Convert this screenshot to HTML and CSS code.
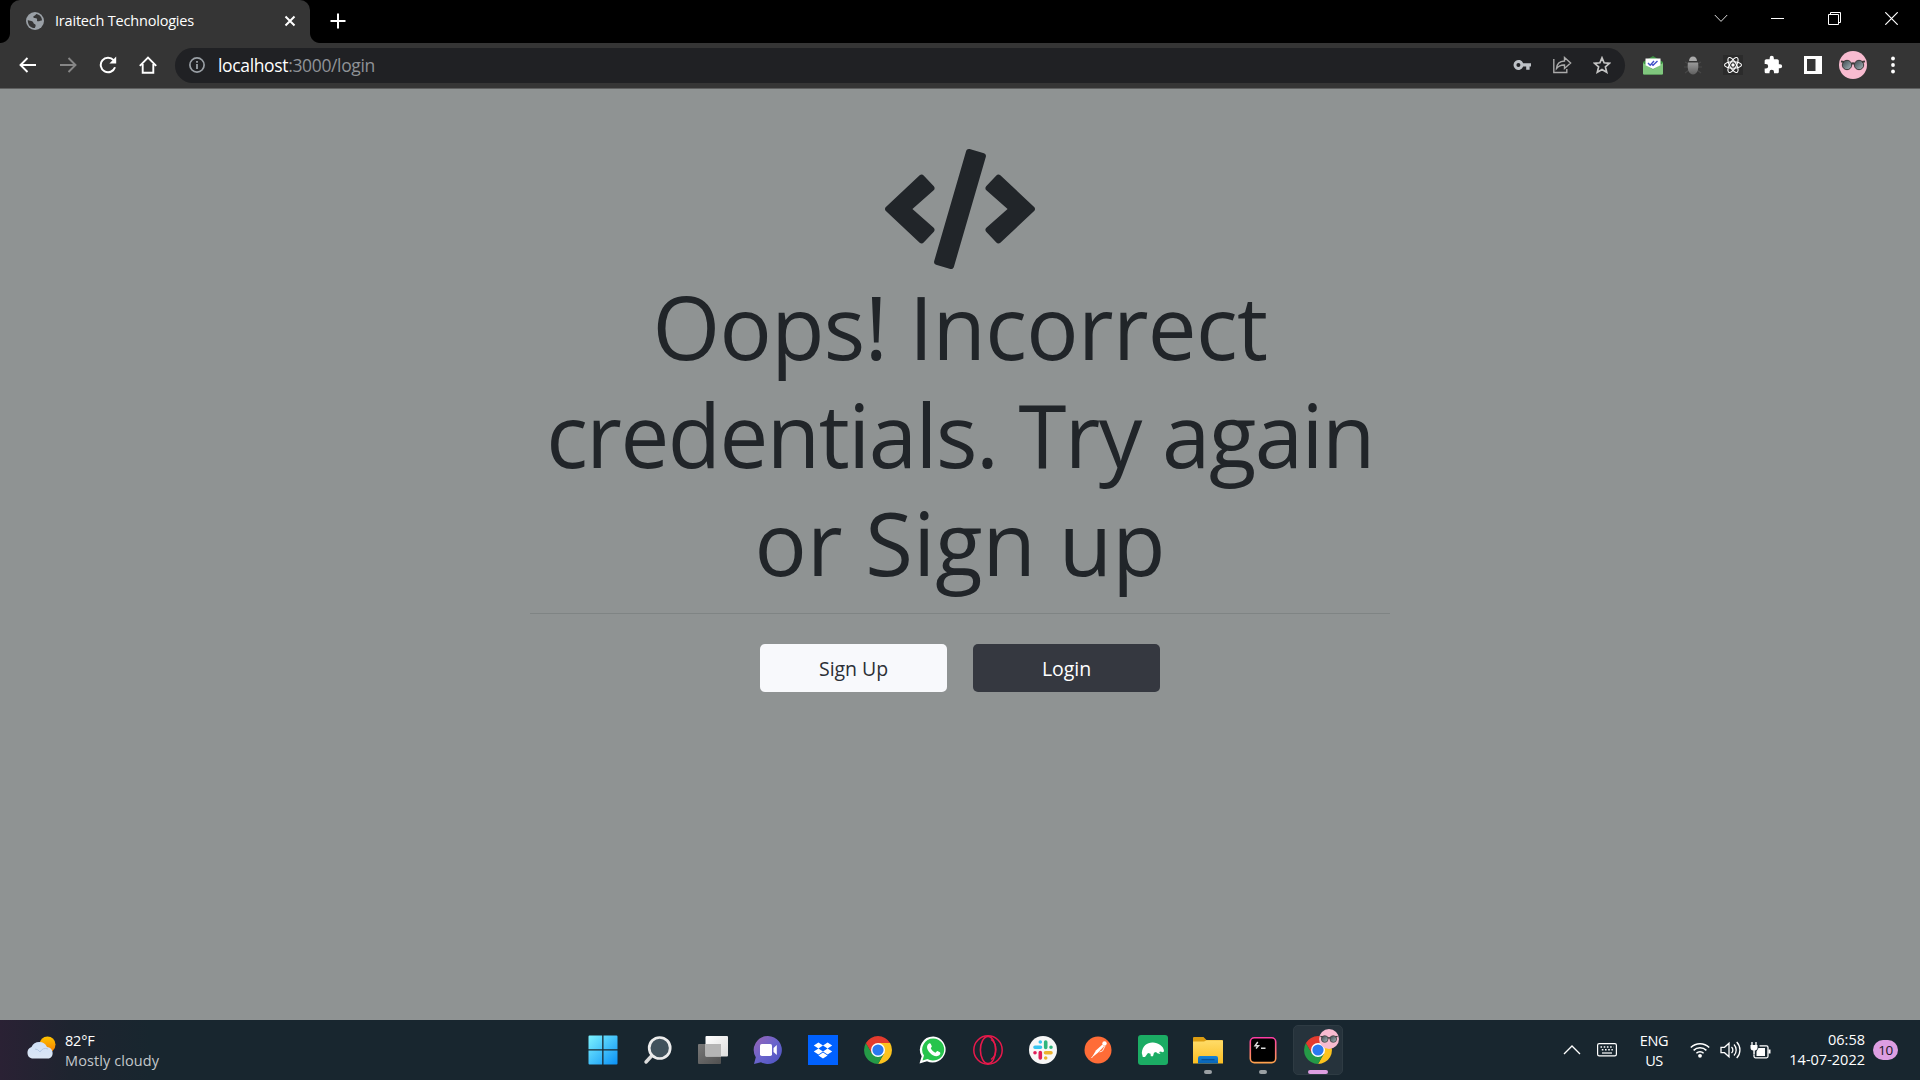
FILE: index.html
```html
<!DOCTYPE html>
<html lang="en">
<head>
<meta charset="utf-8">
<title>Iraitech Technologies</title>
<link rel="stylesheet" href="styles.css">
</head>
<body>
<svg class="defs" width="0" height="0" aria-hidden="true">
  <defs>
    <linearGradient id="win" x1="0" y1="0" x2="1" y2="1"><stop offset="0" stop-color="#7df3ff"/><stop offset="1" stop-color="#0a90f5"/></linearGradient>
    <linearGradient id="chat" x1="0" y1="0" x2="1" y2="1"><stop offset="0" stop-color="#9a64b4"/><stop offset=".5" stop-color="#6a64cc"/><stop offset="1" stop-color="#4a52c0"/></linearGradient>
    <linearGradient id="sun" x1="0" y1="0" x2="0" y2="1"><stop offset="0" stop-color="#ffc400"/><stop offset="1" stop-color="#f57c00"/></linearGradient>
    <linearGradient id="cloud" x1="0" y1="0" x2="0" y2="1"><stop offset="0" stop-color="#cfe0f7"/><stop offset="1" stop-color="#dbe6f4"/></linearGradient>
    <linearGradient id="folder" x1="0" y1="0" x2="0" y2="1"><stop offset="0" stop-color="#ffdc69"/><stop offset="1" stop-color="#fbbe22"/></linearGradient>
    <linearGradient id="blue" x1="0" y1="0" x2="0" y2="1"><stop offset="0" stop-color="#1483d8"/><stop offset="1" stop-color="#0862b4"/></linearGradient>
    <linearGradient id="term" x1="0" y1="0" x2="0" y2="1"><stop offset="0" stop-color="#ff3da5"/><stop offset="1" stop-color="#ffa24d"/></linearGradient>
    <linearGradient id="bug" x1="0" y1="0" x2="0" y2="1"><stop offset="0" stop-color="#9a9a9a"/><stop offset="1" stop-color="#606060"/></linearGradient>
    <linearGradient id="lens" x1="0" y1="0" x2="1" y2="1"><stop offset="0" stop-color="#3a464c"/><stop offset="1" stop-color="#a9b8bd"/></linearGradient>
    <linearGradient id="pane" x1="0" y1="0" x2="1" y2="1"><stop offset="0" stop-color="#fff"/><stop offset="1" stop-color="#ddd"/></linearGradient>
    <linearGradient id="shade" x1="0" y1="0" x2="1" y2="1"><stop offset="0" stop-color="#787878"/><stop offset="1" stop-color="#505050"/></linearGradient>
    <symbol id="chrome" viewBox="0 0 28 28">
      <path d="M14 7h12.100a14 14 0 0 1-12.100 21l6-10.500z" fill="#fcc31e"/>
      <path d="M1.900 7A14 14 0 0 0 14 28l6-10.500-12 0z" fill="#259a47"/>
      <path d="M1.900 7A14 14 0 0 1 26.100 7H14L8 17.500z" fill="#e33b2e"/>
      <circle cx="14" cy="14" r="7" fill="#fff"/><circle cx="14" cy="14" r="5.600" fill="#2a79f0"/>
    </symbol>
    <symbol id="avatar" viewBox="0 0 28 28">
      <circle cx="14" cy="14" r="14" fill="#f8bbd0"/>
      <g fill="url(#lens)" stroke="#3e3a3a" stroke-width="1"><circle cx="8" cy="14" r="4.700"/><circle cx="20" cy="14" r="4.700"/></g>
      <path d="M2 10.400l3 .6M26 10.400l-3 .6M12.500 13q1.500-1.500 3 0" fill="none" stroke="#3e3a3a" stroke-width="1.800"/>
    </symbol>
  </defs>
</svg>

<header class="browser">
  <div class="tabstrip">
    <div class="tab">
      <svg class="favicon" width="18" height="18" viewBox="0 0 18 18"><circle cx="9" cy="9" r="9" fill="#9aa0a6"/><path d="M1.800 8c1.500 1.200 3.500.6 4.700 1.500 1.300 1 .6 2 2 2.400 1.700.5 1.300 2 .3 4.200C4.800 16.200 1.500 13 1.800 8zM10 1.900c-.3 2-3 1.500-2.600 3.300.3 1.500 2.300.5 3.300 1.300 1.100.8-.6 2.600 1.300 2.800 1.600.2 2-1.200 4-.7C16.100 5 13.600 2.300 10 1.900z" fill="#353535"/></svg>
      <span class="tab-title">Iraitech Technologies</span>
      <svg class="tab-close" width="12" height="12" viewBox="0 0 12 12"><path d="M1.500 1.500l9 9M10.500 1.500l-9 9" stroke="#fff" stroke-width="2"/></svg>
    </div>
    <svg class="newtab" width="16" height="16" viewBox="0 0 16 16"><path d="M8 .5v15M.5 8h15" stroke="#fff" stroke-width="2"/></svg>
    <div class="winctl">
      <span><svg width="14" height="9" viewBox="0 0 14 9"><path d="M.8 1l6.200 6.400L13.200 1" fill="none" stroke="#ddd"/></svg></span>
      <span><svg width="13" height="3" viewBox="0 0 13 3"><path d="M0 1.500h13" stroke="#fff"/></svg></span>
      <span><svg width="13" height="13" viewBox="0 0 13 13"><path d="M.5 2.500h10v10H.5zM2.500 2.500v-2h10v10h-2" fill="none" stroke="#fff"/></svg></span>
      <span><svg width="13" height="13" viewBox="0 0 13 13"><path d="M.3.3l12.400 12.400M12.700.3L.3 12.700" stroke="#fff" stroke-width="1.200"/></svg></span>
    </div>
  </div>
  <div class="toolbar">
    <div class="nav">
      <span><svg width="18" height="16" viewBox="0 0 18 16"><path d="M17 8H2M8.500 1L1.500 8l7 7" fill="none" stroke="#fff" stroke-width="1.900"/></svg></span>
      <span><svg width="18" height="16" viewBox="0 0 18 16"><path d="M1 8h15M9.500 1l7 7-7 7" fill="none" stroke="#868686" stroke-width="1.900"/></svg></span>
      <span><svg width="18" height="18" viewBox="0 0 18 18"><path d="M16 11.200A7.300 7.300 0 1 1 14.600 4.200" fill="none" stroke="#fff" stroke-width="2"/><path d="M17.200.6v6.800h-6.800z" fill="#fff"/></svg></span>
      <span><svg width="18" height="18" viewBox="0 0 18 18"><path d="M.8 9.800L9 1.600l8.200 8.200M3.700 8v8.800h10.600V8" fill="none" stroke="#fff" stroke-width="1.900"/></svg></span>
    </div>
    <div class="omnibox">
      <svg class="info" width="16" height="16" viewBox="0 0 16 16"><circle cx="8" cy="8" r="7.100" fill="none" stroke="#9aa0a6" stroke-width="1.700"/><path d="M8 7v5M8 4v1.800" stroke="#9aa0a6" stroke-width="1.800"/></svg>
      <span class="host">localhost</span><span class="path">:3000/login</span>
      <div class="omni-actions">
        <span><svg width="18" height="12" viewBox="0 0 18 12"><path fill="#bdc1c6" fill-rule="evenodd" d="M10.200 4.200A5 5 0 1 0 10.200 7.600h3V10.800h3.400V7.600H18V4.200zM5.400 3.900a2 2 0 1 1 0 4 2 2 0 0 1 0-4z"/></svg></span>
        <span><svg width="20" height="18" viewBox="0 0 20 18"><path d="M1.800 3v13.500h13V13M4.500 12.500c.3-4.300 3-7.300 8-7.500V1.500L18.600 7l-6.100 5.500V9C9 8.800 6.500 10 4.500 12.500z" fill="none" stroke="#aaa" stroke-width="1.400"/></svg></span>
        <span><svg width="18" height="18" viewBox="0 0 18 18"><path d="M9 1.800l2.100 5 5.400.5-4.100 3.600 1.300 5.300L9 13.400l-4.700 2.800 1.300-5.300-4.100-3.600 5.400-.5z" fill="none" stroke="#c4c4c4" stroke-width="1.700"/></svg></span>
      </div>
    </div>
    <div class="exts">
      <span><svg width="22" height="20" viewBox="0 0 22 20"><path d="M1 7L11 1l10 6v11.500a1 1 0 0 1-1 1H2a1 1 0 0 1-1-1z" fill="#3d9343"/><path d="M1 8l10 6.500L21 8v10.500a1 1 0 0 1-1 1H2a1 1 0 0 1-1-1z" fill="#80c77e"/><path d="M3.500 3.500h15v6.700L11 14 3.500 10.200z" fill="#fff"/><path d="M6 8l2.200 2.300L12 6M10 9.500l1 .8L15.500 6" fill="none" stroke="#4150c8" stroke-width="1.400"/></svg></span>
      <span><svg width="18" height="19" viewBox="0 0 18 19"><path d="M1 6l4 2M17 6l-4 2M0 11h5M18 11h-5M1 17l4-3M17 17l-4-3" stroke="#484848" stroke-width="1.200"/><path d="M5 5a4 4.500 0 0 1 8 0z" fill="#aaa"/><path d="M4 6.500h10c1.200 7-1 12-5 12s-6.200-5-5-12z" fill="url(#bug)"/></svg></span>
      <span><svg width="20" height="20" viewBox="0 0 20 20"><rect width="20" height="20" fill="#2b2b2b"/><g fill="none" stroke="#fff" stroke-width="1.100"><ellipse cx="10" cy="10" rx="8.500" ry="3.300"/><ellipse cx="10" cy="10" rx="8.500" ry="3.300" transform="rotate(60 10 10)"/><ellipse cx="10" cy="10" rx="8.500" ry="3.300" transform="rotate(120 10 10)"/></g><circle cx="10" cy="10" r="1.700" fill="#fff"/></svg></span>
      <span><svg width="20" height="20" viewBox="0 0 24 24"><path d="M20.500 11H19V7c0-1.100-.9-2-2-2h-4V3.500a2.500 2.500 0 0 0-5 0V5H4c-1.100 0-2 .9-2 2v3.800h1.500a2.700 2.700 0 0 1 0 5.400H2V20c0 1.100.9 2 2 2h3.800v-1.500a2.700 2.700 0 0 1 5.400 0V22H17c1.100 0 2-.9 2-2v-4h1.500a2.500 2.500 0 0 0 0-5z" fill="#fff"/></svg></span>
      <span><svg width="18" height="18" viewBox="0 0 18 18"><path d="M0 0h18v18H0zM3 3v12h8.500V3z" fill="#fff" fill-rule="evenodd"/></svg></span>
      <span><svg width="28" height="28"><use href="#avatar"/></svg></span>
      <span><svg width="6" height="18" viewBox="0 0 6 18"><g fill="#fff"><circle cx="3" cy="2.500" r="1.900"/><circle cx="3" cy="9" r="1.900"/><circle cx="3" cy="15.500" r="1.900"/></g></svg></span>
    </div>
  </div>
</header>

<main class="page">
  <section class="message">
    <svg class="code-icon" width="150" height="120" viewBox="0 0 640 512"><path fill="#212529" d="M278.900 511.500l-61-17.700c-6.400-1.800-10-8.500-8.200-14.900L346.200 8.700c1.800-6.400 8.500-10 14.900-8.200l61 17.700c6.400 1.800 10 8.500 8.200 14.900L293.800 503.300c-1.900 6.400-8.500 10.100-14.900 8.200zm-114-112.200l43.500-46.400c4.600-4.900 4.300-12.700-.8-17.200L117 256l90.600-79.700c5.100-4.500 5.500-12.300.8-17.200l-43.500-46.400c-4.500-4.800-12.100-5.100-17-.5L3.800 247.200c-5.100 4.700-5.100 12.800 0 17.500l144.100 135.100c4.900 4.600 12.500 4.400 17-.5zm327.200.6l144.100-135.100c5.100-4.700 5.100-12.800 0-17.500L492.100 112.100c-4.800-4.500-12.400-4.300-17 .5L431.600 159c-4.600 4.900-4.300 12.700.8 17.200L523 256l-90.600 79.700c-5.100 4.500-5.500 12.300-.8 17.200l43.500 46.400c4.500 4.900 12.100 5.100 17 .6z"/></svg>
    <h1 class="headline"><span class="line line-1">Oops! Incorrect</span><span class="line line-2">credentials. Try again</span><span class="line line-3">or Sign up</span></h1>
    <hr class="rule">
    <div class="actions">
      <button class="btn btn-light">Sign Up</button>
      <button class="btn btn-dark">Login</button>
    </div>
  </section>
</main>

<footer class="taskbar">
  <div class="weather">
    <svg width="30" height="24" viewBox="0 0 30 24"><circle cx="21.500" cy="8.500" r="8" fill="url(#sun)"/><path d="M6 22.500a6 6 0 0 1-.5-11.500A8.500 8.500 0 0 1 21 11a6 6 0 0 1 2 11.500z" fill="url(#cloud)"/><path d="M9 13q3 0 5 3 3-5 8-3" fill="none" stroke="#b4c8e4" stroke-width="1"/></svg>
    <div class="weather-text"><span class="temp">82°F</span><span class="cond">Mostly cloudy</span></div>
  </div>
  <div class="apps">
    <span><svg width="30" height="30" viewBox="0 0 30 30"><path d="M.5 1.500a1 1 0 0 1 1-1h12.700v13.700H.5zM15.500.5h13a1 1 0 0 1 1 1v12.700h-14zM.5 15.500h13.700v14H1.500a1 1 0 0 1-1-1zM15.500 15.500h14v13a1 1 0 0 1-1 1h-13z" fill="url(#win)"/></svg></span>
    <span><svg width="30" height="30" viewBox="0 0 30 30"><path d="M8.500 21L3 27" stroke="#dcdcdc" stroke-width="3.400" stroke-linecap="round"/><circle cx="16.700" cy="13" r="10.500" fill="#41525c" stroke="#ececec" stroke-width="2.700"/></svg></span>
    <span><svg width="30" height="30" viewBox="0 0 30 30"><rect y="9" width="23" height="20" rx="1" fill="url(#shade)"/><rect x="7.500" y="1" width="22.500" height="20.500" rx="1" fill="url(#pane)"/><path d="M7.500 9H23v12.500H7.500z" fill="#b5b5b5"/></svg></span>
    <span><svg width="30" height="30" viewBox="0 0 30 30"><path d="M15 1a14 14 0 1 1-7 26.200L1 29l1.800-6.800A14 14 0 0 1 15 1z" fill="url(#chat)"/><rect x="7" y="9" width="12" height="12" rx="1.800" fill="#fff"/><path d="M20.500 13l3.300-3v10l-3.300-3z" fill="#fff"/></svg></span>
    <span><svg width="30" height="30" viewBox="0 0 30 30"><path fill="#0061fe" d="M0 0h30v30H0z"/><path fill="#fff" d="M10.400 7.500l4.600 3-4.600 3-4.600-3zM19.600 7.500l4.600 3-4.600 3-4.600-3zM10.400 13.500l4.600 3-4.600 3-4.600-3zM19.600 13.500l4.600 3-4.600 3-4.600-3zM15 17.500l4.600 3-4.600 3-4.600-3z"/></svg></span>
    <span><svg width="28" height="28"><use href="#chrome"/></svg></span>
    <span><svg width="28" height="28" viewBox="0 0 28 28"><path d="M14.500.5A13 13 0 1 1 8 25.200L.5 27.500l2.200-7.200A13.200 13.200 0 0 1 14.500.5z" fill="#fff"/><path d="M14.500 2.600A11 11 0 1 1 8.500 23l-5 1.500L5 19.600a11 11 0 0 1 9.500-17z" fill="#27c44d"/><path d="M10 7.500c.6-.5 1.400-.3 1.700.3l1.100 2.500c.2.500-.9 1.500-1 2 1 2.200 2.700 3.600 4.700 4.400.6-.2 1.400-1.800 2-1.600l2.400 1.200c.7.400.5 1.500 0 2.300-3 3.300-7.600.7-9.800-1.600-2.600-2.600-4.800-6.700-1.100-9.500z" fill="#fff"/></svg></span>
    <span><svg width="30" height="30" viewBox="0 0 30 30"><g fill="none" stroke="#e8194b"><circle cx="15" cy="15" r="14.200" stroke-width="1.500"/><ellipse cx="15" cy="15" rx="7.600" ry="13.500" stroke-width="1.600"/><path d="M18 4.500c6.500 4 6.500 15.500 0 20" stroke-width="1.300"/></g></svg></span>
    <span><svg width="28" height="28" viewBox="0 0 28 28"><circle cx="14" cy="14" r="14" fill="#f7f7f7"/><g stroke-width="3.600" stroke-linecap="round"><path d="M6 11.300h5.500M11.300 6v.01" stroke="#36c5f0"/><path d="M16.700 6v5.500M22 11.300v.01" stroke="#2eb67d"/><path d="M16.500 16.700H22M16.700 22v.01" stroke="#ecb22e"/><path d="M11.300 16.500V22M6 16.700v.01" stroke="#e01e5a"/></g></svg></span>
    <span><svg width="28" height="28" viewBox="0 0 28 28"><circle cx="14" cy="14" r="13.500" fill="#ff6c37"/><circle cx="20.500" cy="7.500" r="2.200" fill="#fff"/><path d="M18.500 8.500l1.600 1.800-6.200 6.500-6.300 5 4.500-7.500z" fill="#fff"/><path d="M21 10l-2.500 5-3 1M8.500 20.500l-1 1.500" stroke="#ffe8df" stroke-width="1" fill="none"/></svg></span>
    <span><svg width="30" height="30" viewBox="0 0 30 30"><rect width="30" height="30" rx="3" fill="#1bac64"/><path d="M3.800 18C4.500 10.500 9.500 7.200 15 7.500c5 .3 10.800 3.500 11 8.500-.5 1.500-2 1.400-3 .6l-2 .3 1.500 2-3.200-.6-1.300-1.300-2 .8-1 3.400h-2.200l-.3-2.500L10 18l-3 4H4.800z" fill="#fff"/></svg></span>
    <span class="running"><svg width="30" height="28" viewBox="0 0 30 28"><path d="M0 2a1 1 0 0 1 1-1h9.500l3 3H29a1 1 0 0 1 1 1v3H0z" fill="#dc9d12"/><path d="M0 5.500h11l2.500-1.300H29a1 1 0 0 1 1 1V27.500H0z" fill="url(#folder)"/><path d="M5 27.500V22a2 2 0 0 1 2-2h16a2 2 0 0 1 2 2v5.500z" fill="url(#blue)"/><path d="M8.500 23.700h13" stroke="#064f95" stroke-width="1.200"/></svg></span>
    <span class="running"><svg width="28" height="28" viewBox="0 0 28 28"><rect x="1.300" y="1.800" width="25.400" height="24.800" rx="4" fill="#000" stroke="url(#term)" stroke-width="1.600"/><path d="M8.800 6L6 9.800h3.500L7 12.500M12 12.300h4.500" fill="none" stroke="#ddd" stroke-width="1.400"/></svg></span>
    <span class="running active"><svg width="28" height="28"><use href="#chrome"/></svg><svg class="badge" width="20" height="20"><use href="#avatar"/></svg></span>
  </div>
  <div class="tray">
    <svg class="t-up" width="18" height="10" viewBox="0 0 18 10"><path d="M1 9l8-8 8 8" fill="none" stroke="#fff" stroke-width="1.300"/></svg>
    <svg class="t-kb" width="20" height="14" viewBox="0 0 20 14"><rect x=".6" y=".6" width="18.800" height="12.300" rx="1.600" fill="none" stroke="#fff" stroke-width="1.200"/><path d="M3.500 4h13M4.800 6.800h11" stroke="#fff" stroke-width="1.500" stroke-dasharray="1.600 1.600"/><path d="M5 10h10" stroke="#fff" stroke-width="1.200"/></svg>
    <div class="lang"><span>ENG</span><span>US</span></div>
    <svg class="t-wifi" width="20" height="16" viewBox="0 0 20 16"><g fill="none" stroke="#fff" stroke-width="1.500"><path d="M.8 5.500a13 13 0 0 1 18.400 0M3.600 8.400a9 9 0 0 1 12.800 0M6.400 11.200a5 5 0 0 1 7.200 0"/></g><circle cx="10" cy="13.800" r="1.900" fill="#fff"/></svg>
    <svg class="t-vol" width="21" height="18" viewBox="0 0 21 18"><path d="M1 6.300h3.500L9 2.200v13.600l-4.500-4.100H1zM11.500 6a4 4 0 0 1 0 6M14 3.500a8 8 0 0 1 0 11M16.700 1a11.500 11.500 0 0 1 0 16" fill="none" stroke="#fff" stroke-width="1.300"/></svg>
    <svg class="t-bat" width="21" height="17" viewBox="0 0 21 17"><path d="M2 0v3M6 0v3" stroke="#fff" stroke-width="1.300"/><path d="M.5 3h7v2.500a3 3 0 0 1-2.700 3V12H3.300V8.500A3 3 0 0 1 .5 5.500zM8.500 6H15v8H6.500V9.500z" fill="#fff"/><path d="M9.500 3.900H16.500a1.500 1.500 0 0 1 1.500 1.500v8.900a1.500 1.500 0 0 1-1.500 1.500H5.500a1.500 1.500 0 0 1-1.500-1.500v-2" fill="none" stroke="#fff" stroke-width="1.300"/><path d="M18.500 7.500h2v4h-2z" fill="#fff"/></svg>
    <div class="clock"><span>06:58</span><span>14-07-2022</span></div>
    <span class="notify">10</span>
  </div>
</footer>
</body>
</html>
```
FILE: styles.css
```css
* { box-sizing: border-box; }
body {
  margin: 0;
  width: 1920px;
  height: 1080px;
  overflow: hidden;
  display: flex;
  flex-direction: column;
  font-family: "Open Sans", "Noto Sans", sans-serif;
  background: #8f9393;
}
svg { display: block; flex: none; }
.defs { position: absolute; }

/* Browser chrome */
.browser { flex: none; height: 89px; background: #353535; border-bottom: 1px solid #5f6060; }
.tabstrip { height: 43px; background: #000; display: flex; align-items: flex-start; padding-left: 10px; }
.tab {
  position: relative;
  width: 300px;
  height: 43px;
  padding: 0 14px 1px 16px;
  display: flex;
  align-items: center;
  background: #353535;
  border-radius: 10px 10px 0 0;
}
.tab::before, .tab::after {
  content: "";
  position: absolute;
  bottom: 0;
  width: 10px;
  height: 10px;
}
.tab::before { left: -10px; background: radial-gradient(circle at 0 0, #000 9.5px, #353535 10.5px); }
.tab::after { right: -10px; background: radial-gradient(circle at 100% 0, #000 9.5px, #353535 10.5px); }
.tab-title { margin-left: 11px; padding-bottom: 2px; font-size: 14.5px; letter-spacing: -0.2px; color: #fff; white-space: nowrap; }
.tab-close { margin-left: auto; }
.newtab { margin: 13px 0 0 20px; }
.winctl { margin-left: auto; height: 37px; display: flex; }
.winctl span { width: 57px; display: flex; align-items: center; justify-content: center; }

.toolbar { height: 45px; display: flex; align-items: center; padding: 0 0 1px 8px; }
.nav, .exts { display: flex; }
.nav span, .exts span { width: 40px; height: 36px; display: flex; align-items: center; justify-content: center; }
.omnibox {
  margin-left: 7px;
  width: 1450px;
  height: 35px;
  border-radius: 18px;
  background: #202124;
  display: flex;
  align-items: center;
  padding-left: 14px;
  font-size: 17.5px;
}
.info { margin-right: 13px; }
.host, .path { padding-bottom: 1px; letter-spacing: -0.35px; }
.host { color: #fff; }
.path { color: #8f9297; }
.omni-actions { margin-left: auto; padding-right: 3px; display: flex; }
.omni-actions span { width: 40px; display: flex; align-items: center; justify-content: center; }
.exts { margin-left: 8px; }

/* Page content */
.page { flex: 1; display: flex; justify-content: center; background: #8f9393; }
.message { width: 860px; padding-top: 60px; display: flex; flex-direction: column; align-items: center; }
.headline { margin: 3px 0 0; font-size: 87px; line-height: 108px; font-weight: 400; color: #212529; display: flex; flex-direction: column; align-items: center; }
.line { white-space: nowrap; }
.line-1 { letter-spacing: -0.65px; }
.line-2 { letter-spacing: -1.5px; }
.line-3 { letter-spacing: 0.1px; }
.rule { width: 100%; height: 1px; margin: 17px 0 30px; border: 0; background: #7f8484; }
.actions { display: flex; gap: 26px; }
.btn { width: 187px; height: 48px; padding: 0; border: 0; border-radius: 5px; font: 400 19.5px "Open Sans", sans-serif; letter-spacing: -0.05px; }
.btn-light { background: #f8f9fc; color: #2c3036; }
.btn-dark { background: #353840; color: #fff; }

/* Taskbar */
.taskbar {
  flex: none;
  height: 60px;
  display: grid;
  grid-template-columns: 575px 770px 575px;
  background: linear-gradient(90deg, #2a2134 0, #1e242f 70px, #18262f 150px, #18262f);
  color: #fff;
}
.weather { display: flex; align-items: center; padding-left: 26px; gap: 9px; }
.weather svg { margin-bottom: 4px; }
.weather-text { display: flex; flex-direction: column; padding-top: 2px; font-size: 14.5px; line-height: 20px; }
.temp { letter-spacing: -0.2px; }
.cond { letter-spacing: 0.1px; color: #c3c8cb; }
.apps { display: flex; }
.apps span { position: relative; width: 55px; height: 60px; display: flex; align-items: center; justify-content: center; }
.running::after { content: ""; position: absolute; bottom: 6px; left: 24px; width: 8px; height: 4px; border-radius: 2px; background: #9aa0a4; }
.active::before { content: ""; position: absolute; inset: 5px 2px 5px 3px; border-radius: 5px; background: #26333c; border: 1px solid #2e3b43; }
.active svg { position: relative; }
.active::after { left: 18px; width: 20px; background: #dd9ee2; }
.active .badge { position: absolute; left: 29px; top: 9px; }
.tray { display: flex; align-items: center; justify-content: flex-end; padding-right: 22px; font-size: 14.5px; line-height: 20px; }
.lang, .clock { display: flex; flex-direction: column; }
.lang { align-items: center; width: 32px; padding-top: 1px; letter-spacing: -0.4px; margin: 0 20px 0 21px; }
.t-kb { margin-left: 16px; }
.t-vol { margin-left: 10px; }
.t-bat { margin-left: 9px; }
.clock { align-items: flex-end; width: 80px; margin: 0 8px 0 14px; }
.notify { width: 25px; height: 20px; border-radius: 10px; background: #dd9ee2; color: #201624; text-align: center; font-size: 13.5px; line-height: 21px; letter-spacing: -0.5px; }
```
